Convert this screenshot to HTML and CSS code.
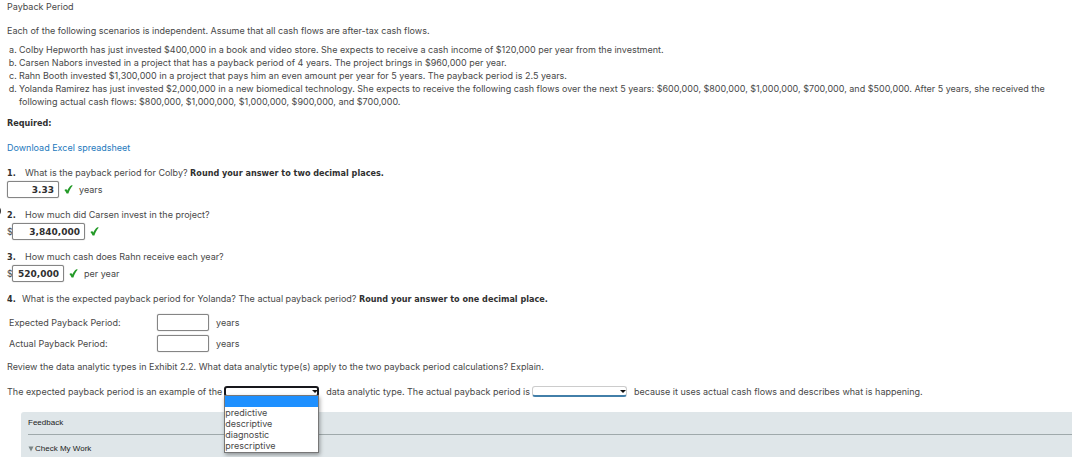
FILE: index.html
```
<!DOCTYPE html>
<html lang="en">
<head>
    <meta charset="UTF-8">
    <meta name="viewport" content="width=device-width, initial-scale=1.0">
    <title>Payback Period</title>
    <link rel="stylesheet" href="styles.css">
</head>
<body>
    <span class="edge-handle"></span>
    <main class="problem">
        <p class="title">Payback Period</p>
        <p class="intro">Each of the following scenarios is independent. Assume that all cash flows are after-tax cash flows.</p>
        <ol class="scenarios">
            <li>Colby Hepworth has just invested $400,000 in a book and video store. She expects to receive a cash income of $120,000 per year from the investment.</li>
            <li>Carsen Nabors invested in a project that has a payback period of 4 years. The project brings in $960,000 per year.</li>
            <li>Rahn Booth invested $1,300,000 in a project that pays him an even amount per year for 5 years. The payback period is 2.5 years.</li>
            <li>Yolanda Ramirez has just invested $2,000,000 in a new biomedical technology. She expects to receive the following cash flows over the next 5 years: $600,000, $800,000, $1,000,000, $700,000, and $500,000. After 5 years, she received the<br>following actual cash flows: $800,000, $1,000,000, $1,000,000, $900,000, and $700,000.</li>
        </ol>
        <p class="required"><b>Required:</b></p>
        <p class="download"><a href="#">Download Excel spreadsheet</a></p>

        <section class="question">
            <p><label for="q1"><b class="number">1.</b>What is the payback period for Colby? <b>Round your answer to two decimal places.</b></label></p>
            <div class="answer">
                <input class="field" id="q1" type="text" value="3.33">
                <svg class="check" viewBox="0 0 9 9" role="img" aria-label="Correct"><path d="M0.4 5 2.2 3.9 3.3 5.6C4.2 3.4 5.4 1.6 7.4 0.2L8.8 0.6C6.8 3 5.4 5.4 4.4 8.6H2.6C2.1 7.2 1.4 6 0.4 5Z"/></svg>
                <span>years</span>
            </div>
        </section>

        <section class="question">
            <p><label for="q2"><b class="number">2.</b>How much did Carsen invest in the project?</label></p>
            <div class="answer">
                <span class="dollar">$</span>
                <input class="field wide" id="q2" type="text" value="3,840,000">
                <svg class="check" viewBox="0 0 9 9" role="img" aria-label="Correct"><path d="M0.4 5 2.2 3.9 3.3 5.6C4.2 3.4 5.4 1.6 7.4 0.2L8.8 0.6C6.8 3 5.4 5.4 4.4 8.6H2.6C2.1 7.2 1.4 6 0.4 5Z"/></svg>
            </div>
        </section>

        <section class="question">
            <p><label for="q3"><b class="number">3.</b>How much cash does Rahn receive each year?</label></p>
            <div class="answer">
                <span class="dollar">$</span>
                <input class="field" id="q3" type="text" value="520,000">
                <svg class="check" viewBox="0 0 9 9" role="img" aria-label="Correct"><path d="M0.4 5 2.2 3.9 3.3 5.6C4.2 3.4 5.4 1.6 7.4 0.2L8.8 0.6C6.8 3 5.4 5.4 4.4 8.6H2.6C2.1 7.2 1.4 6 0.4 5Z"/></svg>
                <span>per year</span>
            </div>
        </section>

        <section class="question">
            <p><b class="number short">4.</b>What is the expected payback period for Yolanda? The actual payback period? <b>Round your answer to one decimal place.</b></p>
            <div class="periods">
                <label for="expected">Expected Payback Period:</label>
                <input class="field" id="expected" type="text">
                <span>years</span>
                <label for="actual">Actual Payback Period:</label>
                <input class="field" id="actual" type="text">
                <span>years</span>
            </div>
        </section>

        <p class="review">Review the data analytic types in Exhibit 2.2. What data analytic type(s) apply to the two payback period calculations? Explain.</p>

        <div class="sentence">
            <label for="type-expected">The expected payback period is an example of the</label>
            <div class="dropdown open">
                <select id="type-expected">
                    <option></option>
                    <option>predictive</option>
                    <option>descriptive</option>
                    <option>diagnostic</option>
                    <option>prescriptive</option>
                </select>
                <ul class="menu">
                    <li class="selected"></li>
                    <li>predictive</li>
                    <li>descriptive</li>
                    <li>diagnostic</li>
                    <li>prescriptive</li>
                </ul>
            </div>
            <label for="type-actual">data analytic type. The actual payback period is</label>
            <div class="dropdown">
                <select id="type-actual">
                    <option></option>
                    <option>predictive</option>
                    <option>descriptive</option>
                    <option>diagnostic</option>
                    <option>prescriptive</option>
                </select>
            </div>
            <span>because it uses actual cash flows and describes what is happening.</span>
        </div>
    </main>

    <aside class="feedback">
        <div class="feedback-title">Feedback</div>
        <button class="check-work" type="button">
            <svg class="triangle" viewBox="0 0 6 6" aria-hidden="true"><path d="M0.5 0.5H5.5L3 5.5Z"/></svg>
            Check My Work
        </button>
    </aside>
</body>
</html>
```
FILE: styles.css
```
:root {
    --text-color: #484848;
    --bold-color: #303030;
    --link-color: #2479bd;
    --border-color: #858585;
    --panel-color: #dfe6e9;
    --correct-color: #249a28;
}

* {
    margin: 0;
    padding: 0;
    box-sizing: border-box;
}

body {
    font-family: Inter, Verdana, sans-serif;
    font-size: 9px;
    line-height: 13px;
    color: var(--text-color);
    background: #fff;
    overflow: hidden;
}

b {
    color: var(--bold-color);
    font-family: "DejaVu Sans Condensed", Inter, sans-serif;
    line-height: 9px;
}

a {
    color: var(--link-color);
    text-decoration: none;
}

.problem {
    padding: 0 7px;
}

.intro {
    margin-top: 11px;
}

.scenarios {
    margin-top: 6px;
    padding-left: 12px;
    list-style: lower-alpha;
}

.required {
    margin-top: 8px;
}

.download {
    margin: 12px 0;
}

.question {
    margin-bottom: 10px;
}

.number {
    display: inline-block;
    width: 18px;
}

.number.short {
    width: 15px;
}

.answer {
    display: flex;
    align-items: center;
    margin-top: 2px;
}

.dollar {
    width: 5px;
}

.field {
    width: 52px;
    height: 17px;
    padding: 0 4px;
    border: 1px solid var(--border-color);
    border-radius: 2px;
    box-shadow: 0 0 1px var(--border-color);
    background: #fff;
    color: var(--bold-color);
    font: bold 9px "DejaVu Sans", Verdana, sans-serif;
    text-align: right;
}

.field.wide {
    width: 73px;
}

.check {
    width: 9px;
    height: 9px;
    margin: 0 6px 0 5px;
    fill: var(--correct-color);
}

.periods {
    display: grid;
    grid-template-columns: 148px 52px 1fr;
    row-gap: 4px;
    align-items: center;
    margin-top: 9px;
    padding-left: 2px;
}

.periods span {
    padding-left: 7px;
}

.review {
    margin-top: -2px;
}

.sentence {
    display: flex;
    align-items: center;
    margin-top: 12px;
    white-space: nowrap;
}

.dropdown {
    position: relative;
    display: flex;
    margin: 0 7px 0 2px;
}

.dropdown::after {
    content: "";
    position: absolute;
    top: 4px;
    right: 1px;
    border: 3px solid transparent;
    border-top-color: #111;
    border-bottom: 0;
    pointer-events: none;
}

.dropdown select {
    width: 95px;
    height: 11px;
    appearance: none;
    border: 1px solid #ccc;
    border-bottom: 2px solid #427fa9;
    border-radius: 3px;
    background: #fff;
    font: inherit;
}

.dropdown.open select {
    border: 2px solid #18181c;
    outline: none;
}

.menu {
    position: absolute;
    z-index: 1;
    top: 9px;
    left: 0;
    width: 95px;
    padding-bottom: 1px;
    border: 1px solid #777;
    background: #fff;
    box-shadow: 1px 2px 4px rgba(0, 0, 0, 0.35);
    list-style: none;
    line-height: 11px;
}

.menu li {
    height: 11px;
}

.menu .selected {
    background: #1e90ff;
}

.feedback {
    margin: 14px 0 0 21px;
    padding: 0 0 4px 7px;
    border-top-left-radius: 3px;
    background: var(--panel-color);
    color: #222;
    font-family: "Liberation Sans", Arial, sans-serif;
    font-size: 8px;
}

.feedback-title {
    padding: 4px 0 5px;
    border-bottom: 1px solid #9fa9ab;
}

.check-work {
    display: flex;
    align-items: center;
    gap: 1px;
    margin-top: 7px;
    border: 0;
    background: none;
    color: inherit;
    font: inherit;
    line-height: 13px;
}

.triangle {
    width: 6px;
    height: 6px;
    fill: #7b8587;
}

/* tab of the collapsed side panel, mostly off screen */
.edge-handle {
    position: absolute;
    top: 205px;
    left: -11px;
    width: 12px;
    height: 12px;
    border-radius: 50%;
    background: #333;
}
```
